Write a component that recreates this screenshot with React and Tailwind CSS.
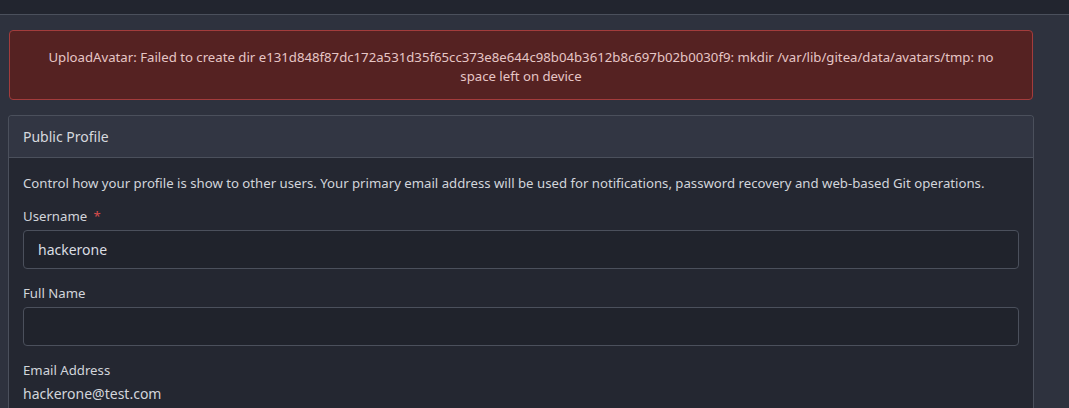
import React from 'react';

const font = { fontFamily: '"Noto Sans", "Liberation Sans", sans-serif' };

const App = () => {
  return (
    <div className="w-full min-h-[408px] bg-[#2e323e] text-[#d2d5db] text-[13.2px]" style={font}>
      <div className="h-[15px] bg-[#22252f] border-b border-[#4b505c]"></div>
      <div className="pl-[9px] pr-[36px] pt-[15px]">
        <div className="rounded border border-[#a33c3c] bg-[#552222] text-[#e6c6c6] text-center px-[30px] pt-[17px] pb-[13px] leading-[19px]">
          UploadAvatar: Failed to create dir e131d848f87dc172a531d35f65cc373e8e644c98b04b3612b8c697b02b0030f9: mkdir /var/lib/gitea/data/avatars/tmp: no space left on device
        </div>
      </div>
      <div className="pl-[8px] pr-[35px] pt-[15px]">
        <div className="rounded-t border border-[#4b505c] border-b-0 overflow-hidden">
          <div className="h-[42px] bg-[#323643] border-b border-[#4b505c] px-[14px] flex items-center text-[14px] text-[#d6d9de]">
            Public Profile
          </div>
          <div className="bg-[#242731] px-[14px] pt-[16px] pb-[20px]">
            <p className="leading-[18px]">Control how your profile is show to other users. Your primary email address will be used for notifications, password recovery and web-based Git operations.</p>
            <div className="mt-[15px]">
              <div className="leading-[18px]">Username <span className="text-[#d94c4c] ml-[3px]">*</span></div>
              <div className="mt-[5px] h-[39px] rounded border border-[#4b505c] bg-[#20232c] px-[14px] flex items-center text-[14px] text-[#dadde2]">hackerone</div>
            </div>
            <div className="mt-[15px]">
              <div className="leading-[18px]">Full Name</div>
              <div className="mt-[5px] h-[39px] rounded border border-[#4b505c] bg-[#20232c]"></div>
            </div>
            <div className="mt-[15px]">
              <div className="leading-[18px]">Email Address</div>
              <div className="mt-[6px] text-[14px] leading-[18px]">hackerone@test.com</div>
            </div>
          </div>
        </div>
      </div>
    </div>
  );
};

export default App;
